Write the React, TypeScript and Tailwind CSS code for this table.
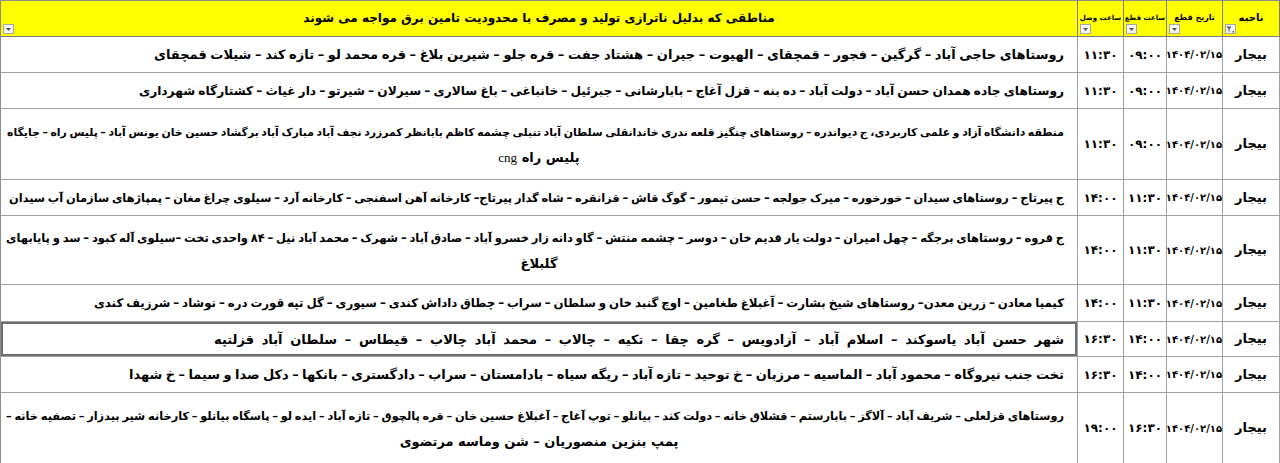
import React, { useLayoutEffect, useRef, useState } from "react"

type Row = {
  h: string
  start: string
  end: string
  line: string
  width: number
  extra?: React.ReactNode
  selected?: boolean
}

// widths are the measured spans of each first line in the source sheet
const rows: Row[] = [
  {
    h: "h-[36px]",
    start: "۰۹:۰۰",
    end: "۱۱:۳۰",
    width: 910,
    line: "روستاهای حاجی آباد – گرگین – فجور – قمچقای – الهیوت – جیران – هشتاد جفت – قره جلو – شیرین بلاغ – قره محمد لو – تازه کند – شیلات قمچقای",
  },
  {
    h: "h-[36px]",
    start: "۰۹:۰۰",
    end: "۱۱:۳۰",
    width: 925,
    line: "روستاهای جاده همدان حسن آباد – دولت آباد – ده بنه – قزل آغاج – بابارشانی – جبرئیل – خانباغی – باغ سالاری – سیرلان – شیرتو – دار غیاث – کشتارگاه شهرداری",
  },
  {
    h: "h-[71px]",
    start: "۰۹:۰۰",
    end: "۱۱:۳۰",
    width: 1057,
    line: "منطقه دانشگاه آزاد و علمی کاربردی، ج دیواندره – روستاهای چنگیز قلعه ندری خاندانقلی سلطان آباد تنبلی چشمه کاظم بابانظر کمرزرد نجف آباد مبارک آباد برگشاد حسین خان یونس آباد – پلیس راه – جایگاه",
    extra: (
      <>
        پلیس راه <span className="font-normal font-['Liberation_Serif',serif] text-[13px]">cng</span>
      </>
    ),
  },
  {
    h: "h-[36px]",
    start: "۱۱:۳۰",
    end: "۱۴:۰۰",
    width: 1055,
    line: "ج پیرتاج – روستاهای سیدان – خورخوره – میرک جولجه – حسن تیمور – گوگ قاش – قزانقره – شاه گدار پیرتاج– کارخانه آهن اسفنجی – کارخانه آرد – سیلوی چراغ مغان – پمپاژهای سازمان آب سیدان",
  },
  {
    h: "h-[69px]",
    start: "۱۱:۳۰",
    end: "۱۴:۰۰",
    width: 1058,
    line: "ج قروه – روستاهای برجگه – چهل امیران – دولت یار قدیم خان – دوسر – چشمه منتش – گاو دانه زار خسرو آباد – صادق آباد – شهرک – محمد آباد نیل – ۸۴ واحدی تخت –سیلوی آله کبود – سد و پایابهای",
    extra: "گلبلاغ",
  },
  {
    h: "h-[37px]",
    start: "۱۱:۳۰",
    end: "۱۴:۰۰",
    width: 970,
    line: "کیمیا معادن – زرین معدن– روستاهای شیخ بشارت – آغبلاغ طغامین – اوچ گنبد خان و سلطان – سراب – چطاق داداش کندی – سیوری – گل تپه قورت دره – نوشاد – شرزیف کندی",
  },
  {
    h: "h-[35px]",
    start: "۱۴:۰۰",
    end: "۱۶:۳۰",
    width: 850,
    selected: true,
    line: "شهر حسن آباد یاسوکند – اسلام آباد – آزادویس – گره چقا – تکیه – چالاب – محمد آباد چالاب – قیطاس – سلطان آباد قزلتپه",
  },
  {
    h: "h-[36px]",
    start: "۱۴:۰۰",
    end: "۱۶:۳۰",
    width: 935,
    line: "تخت جنب نیروگاه – محمود آباد – الماسیه – مرزبان – خ توحید – تازه آباد – ریگه سیاه – بادامستان – سراب – دادگستری – بانکها – دکل صدا و سیما – خ شهدا",
  },
  {
    h: "h-[71px]",
    start: "۱۶:۳۰",
    end: "۱۹:۰۰",
    width: 1058,
    line: "روستاهای قزلعلی – شریف آباد – آلاگز – بابارستم – قشلاق خانه – دولت کند – بیانلو – توپ آغاج – آغبلاغ حسین خان – قره پالچوق – تازه آباد – ایده لو – پاسگاه بیانلو – کارخانه شیر بیدزار – تصفیه خانه –",
    extra: "پمپ بنزین منصوریان – شن وماسه مرتضوی",
  },
]

const BASE = 13

// stretch or squeeze a line so it spans the same width as in the sheet
function FitLine({ text, target }: { text: string; target: number }) {
  const ref = useRef<HTMLSpanElement>(null)
  const [fit, setFit] = useState<React.CSSProperties>({})

  useLayoutEffect(() => {
    const el = ref.current
    if (!el) return
    const n = (text.match(/ /g) || []).length || 1
    el.style.fontSize = BASE + "px"
    el.style.wordSpacing = "0px"
    const w = el.getBoundingClientRect().width
    let ws = (target - w) / n
    let fs = BASE
    if (ws < -1.2 || ws > 5) {
      const c = ws < -1.2 ? -1.2 : 5
      fs = Math.min(14, (BASE * (target - c * n)) / w)
      ws = c
    }
    el.style.fontSize = fs + "px"
    el.style.wordSpacing = ws + "px"
    const w2 = el.getBoundingClientRect().width
    ws += (target - w2) / n
    setFit({ fontSize: fs + "px", wordSpacing: ws + "px" })
  }, [text, target])

  return (
    <span ref={ref} style={fit} className="inline-block whitespace-nowrap">
      {text}
    </span>
  )
}

function FilterButton({ funnel }: { funnel?: boolean }) {
  return (
    <span className="absolute left-[2px] bottom-[2px] flex h-[10px] w-[11px] items-center justify-center border border-[#a6a6a6] bg-[#f4f4f4]">
      {funnel ? (
        <svg width="9" height="7" viewBox="0 0 9 7">
          <path d="M0.5 0.5h5l-2 2.5v3l-1-0.8v-2.2z" fill="#555" />
          <rect x="6.5" y="5" width="1.5" height="1.5" fill="#555" />
        </svg>
      ) : (
        <svg width="5" height="3" viewBox="0 0 5 3">
          <path d="M0 0h5L2.5 3z" fill="#555" />
        </svg>
      )}
    </span>
  )
}

const th =
  "relative h-[36px] whitespace-nowrap border-r border-b border-[#7a7a7a] bg-[#ffff00] align-top pt-[10px] text-center font-bold text-black leading-[14px]"
const td = "border-r border-b border-[#a0a0a0] text-center font-bold text-black"

export default function App() {
  return (
    <div className="w-[1280px] h-[463px] overflow-hidden bg-white font-['DejaVu_Sans',sans-serif]">
      <table dir="rtl" className="w-[1280px] table-fixed border-collapse border-t border-l border-[#8c8c8c]">
        <colgroup>
          <col className="w-[57px]" />
          <col className="w-[56px]" />
          <col className="w-[43px]" />
          <col className="w-[46px]" />
          <col />
        </colgroup>
        <thead>
          <tr className="h-[36px]">
            <th className={th + " text-[10px]"}>
              ناحیه
              <FilterButton funnel />
            </th>
            <th className={th + " text-[8px]"}>
              تاریخ قطع
              <FilterButton />
            </th>
            <th className={th + " text-[7px]"}>
              ساعت قطع
              <FilterButton />
            </th>
            <th className={th + " text-[7px]"}>
              ساعت وصل
              <FilterButton />
            </th>
            <th className={th + " text-[12px]"}>
              مناطقی که بدلیل ناترازی تولید و مصرف با محدودیت تامین برق مواجه می شوند
              <FilterButton />
            </th>
          </tr>
        </thead>
        <tbody>
          {rows.map((r, i) => (
            <tr key={i} className={r.h}>
              <td className={td + " text-[13px]"}>بیجار</td>
              <td className={td + " text-[10px]"}>۱۴۰۴/۰۲/۱۵</td>
              <td className={td + " text-[12px]"}>{r.start}</td>
              <td className={td + " text-[12px]"}>{r.end}</td>
              <td
                className={
                  td +
                  " overflow-hidden px-[13px] text-[13px] leading-[25px]" +
                  (r.selected ? " shadow-[inset_0_0_0_2px_#6e6e6e]" : "")
                }
              >
                <div className="text-right">
                  <FitLine text={r.line} target={r.width} />
                </div>
                {r.extra && <div className="whitespace-nowrap text-center">{r.extra}</div>}
              </td>
            </tr>
          ))}
        </tbody>
      </table>
    </div>
  )
}
